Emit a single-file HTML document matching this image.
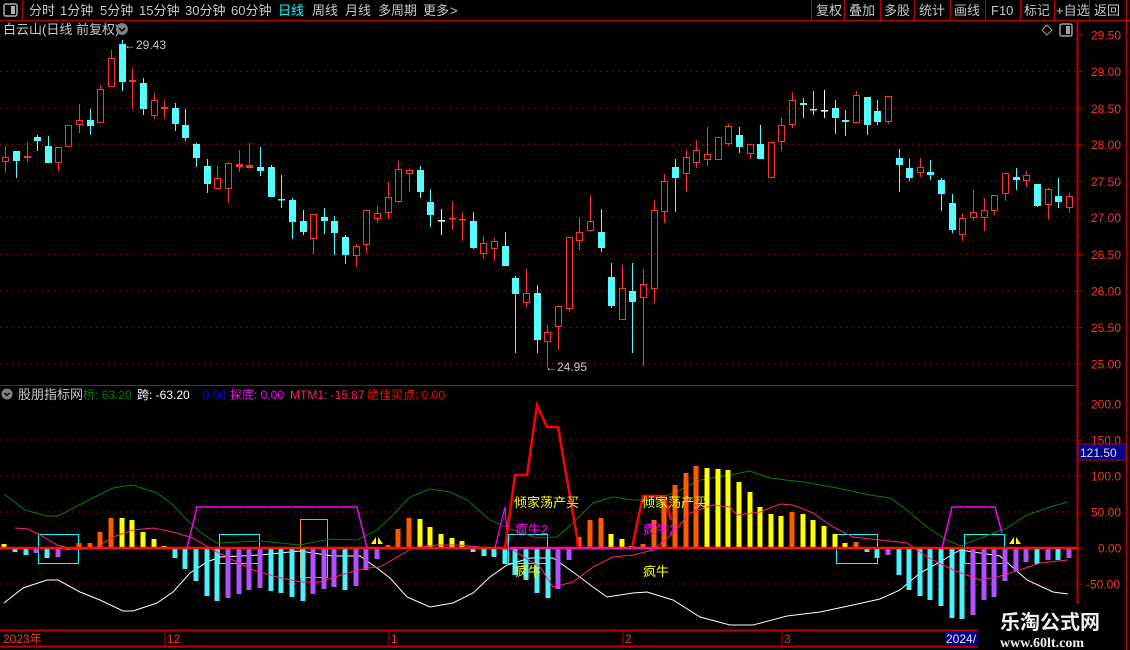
<!DOCTYPE html>
<html><head><meta charset="utf-8"><style>
html,body{margin:0;padding:0;background:#000;width:1130px;height:650px;overflow:hidden;font-family:"Liberation Sans","Noto Sans CJK SC",sans-serif;}
svg{position:absolute;left:0;top:0}
</style></head><body>
<svg id="s" width="1130" height="650" xmlns="http://www.w3.org/2000/svg" font-family="Liberation Sans, Noto Sans CJK SC, sans-serif">
<rect width="1130" height="650" fill="#000"/>
<!-- toolbar -->
<line x1="0" y1="20.5" x2="1130" y2="20.5" stroke="#c00000"/>
<line x1="22.5" y1="0" x2="22.5" y2="20" stroke="#c00000"/>
<rect x="4" y="4" width="13" height="12" rx="2" fill="none" stroke="#b0b0b0" stroke-width="1.5"/>
<rect x="11" y="6" width="4" height="8" fill="#b0b0b0"/>
<g font-size="13" fill="#c8c8c8">
<text x="29" y="15">分时</text><text x="60" y="15">1分钟</text><text x="100" y="15">5分钟</text><text x="139" y="15">15分钟</text><text x="185" y="15">30分钟</text><text x="231" y="15">60分钟</text><text x="278" y="15" fill="#00ffff">日线</text><text x="312" y="15">周线</text><text x="345" y="15">月线</text><text x="378" y="15">多周期</text><text x="423" y="15">更多</text><text x="450" y="15">&gt;</text>
<text x="816" y="15">复权</text><text x="849" y="15">叠加</text><text x="884" y="15">多股</text><text x="919" y="15">统计</text><text x="954" y="15">画线</text><text x="991" y="15">F10</text><text x="1024" y="15">标记</text><text x="1056" y="15">+自选</text><text x="1094" y="15">返回</text>
</g>
<g stroke="#c00000"><line x1="811.5" y1="0" x2="811.5" y2="20"/><line x1="844.5" y1="0" x2="844.5" y2="20"/><line x1="880.5" y1="0" x2="880.5" y2="20"/><line x1="914.5" y1="0" x2="914.5" y2="20"/><line x1="950.5" y1="0" x2="950.5" y2="20"/><line x1="985.5" y1="0" x2="985.5" y2="20"/><line x1="1020.5" y1="0" x2="1020.5" y2="20"/><line x1="1054.5" y1="0" x2="1054.5" y2="20"/><line x1="1089.5" y1="0" x2="1089.5" y2="20"/><line x1="1126.5" y1="0" x2="1126.5" y2="650"/></g>
<!-- title -->
<text x="3" y="34" font-size="13" fill="#c8c8c8">白云山(日线 前复权)</text>
<circle cx="122" cy="29" r="6" fill="#808080"/><path d="M119 28 L122 31 L125 28" stroke="#000" stroke-width="1.5" fill="none"/>
<path d="M1047 25 L1052 30 L1047 35 L1042 30 Z" fill="none" stroke="#a0a0a0"/>
<rect x="1060" y="24" width="12" height="12" rx="2" fill="none" stroke="#a0a0a0" stroke-width="1.5"/><rect x="1066" y="26" width="4" height="8" fill="#a0a0a0"/>
<!-- frames -->
<line x1="1077.5" y1="20" x2="1077.5" y2="630" stroke="#c00000" stroke-width="2"/>
<line x1="0" y1="385.5" x2="1077" y2="385.5" stroke="#c00000"/>
<line x1="0" y1="630.5" x2="978" y2="630.5" stroke="#c00000" stroke-width="2"/>
<line x1="0" y1="646.5" x2="978" y2="646.5" stroke="#c00000" stroke-width="2"/>
<g id="grid" stroke="#a01010" stroke-dasharray="1.5 4.5"></g>
<g id="ticks" stroke="#c00000"></g>
<g font-size="12" fill="#ff3030" id="axis"></g>
<g id="cand"></g>
<text x="124" y="49" font-size="12" fill="#c8c8c8">←29.43</text>
<text x="545" y="371" font-size="12" fill="#c8c8c8">←24.95</text>
<!-- indicator header -->
<circle cx="7" cy="394" r="5.5" fill="#808080"/><path d="M4.5 393 L7 395.5 L9.5 393" stroke="#000" stroke-width="1.3" fill="none"/>
<g font-size="12">
<text x="18" y="399" fill="#c8c8c8" font-size="13">股朋指标网</text>
<text x="83" y="399" fill="#008000">桥: 63.20</text>
<text x="137" y="399" fill="#ffffff">跨: -63.20</text>
<text x="196" y="399" fill="#0000ff">: 0.00</text>
<text x="230" y="399" fill="#ff00ff">探底: 0.00</text>
<text x="290" y="399" fill="#ff2070">MTM1: -15.87</text>
<text x="367" y="399" fill="#ff0000">绝佳买点: 0.00</text>
</g>
<g id="ind"></g>
<!-- bottom axis -->
<g stroke="#c00000"><line x1="165" y1="630" x2="165" y2="646"/><line x1="389" y1="630" x2="389" y2="646"/><line x1="623" y1="630" x2="623" y2="646"/><line x1="782" y1="630" x2="782" y2="646"/></g>
<g font-size="12" fill="#ff3030"><text x="3" y="643">2023年</text><text x="167" y="643">12</text><text x="391" y="643">1</text><text x="625" y="643">2</text><text x="784" y="643">3</text></g>
<rect x="945" y="631" width="33" height="15" fill="#000090"/><text x="946" y="643" font-size="12" fill="#e0e0e0">2024/</text>
<rect x="978" y="604" width="148" height="46" fill="#000"/>
<text x="1000" y="629" font-size="20" font-weight="bold" fill="#f0f0f0">乐淘公式网</text>
<text x="1000" y="647" font-size="14" font-weight="bold" fill="#f0f0f0" font-family="Liberation Serif, serif">www.60lt.com</text>
</svg>
<script>
var NS="http://www.w3.org/2000/svg";
function el(p,t,a,txt){var e=document.createElementNS(NS,t);for(var k in a)e.setAttribute(k,a[k]);if(txt!=null)e.textContent=txt;document.getElementById(p).appendChild(e);return e;}
// grid
[71.3,108.3,144.3,181.3,217.3,254.3,291,327.6,364].forEach(function(y){el('grid','line',{x1:0,y1:y,x2:1077,y2:y});});
[440,476,512,584].forEach(function(y){el('grid','line',{x1:0,y1:y,x2:1077,y2:y});});
// axis labels
var pl=[["29.50",35],["29.00",71.3],["28.50",108.3],["28.00",144.3],["27.50",181.3],["27.00",217.3],["26.50",254.3],["26.00",291],["25.50",327.6],["25.00",364]];
pl.forEach(function(p){el('axis','text',{x:1091,y:p[1]+4.5},p[0]);el('ticks','line',{x1:1077,y1:p[1],x2:1083,y2:p[1]});});
for(var y=35+18.2;y<380;y+=36.5)el('ticks','line',{x1:1077,y1:y,x2:1080,y2:y});
var il=[["200.0",404],["150.0",440],["100.0",476],["50.00",512],["0.00",548],["-50.00",584]];
il.forEach(function(p){el('axis','text',{x:(p[0]=="0.00"?1098:(p[0]=="-50.00"?1086:1091)),y:p[1]+4.5},p[0]);el('ticks','line',{x1:1077,y1:p[1],x2:1083,y2:p[1]});});
for(var y=422;y<620;y+=36)el('ticks','line',{x1:1077,y1:y,x2:1080,y2:y});
el('axis','rect',{x:1078,y:444,width:48,height:16,fill:"#000090",stroke:"#c00000"});
el('axis','text',{x:1080,y:457,fill:"#e0e0e0"},"121.50");
// candles
var C=[[4.5,146,173,157,162,'r'],[15.5,151,178,151,161,'c'],[26.7,142,162,156,158,'r'],[36.7,135,151,137,141,'c'],[47.7,136,163,146,163,'c'],[58.3,147,171,147,163,'r'],[68.3,125,147,125,147,'r'],[79.3,104,133,120,125,'r'],[90.3,109,135,120,126,'c'],[100.3,85,123,89,123,'r'],[111.3,50,87,58,87,'r'],[122.3,40,91,44,82,'c'],[132.3,68,109,80,82,'r'],[143.3,78,115,83,109,'c'],[154.3,93,119,100,116,'r'],[164.3,100,119,107,109,'r'],[175.3,103,131,108,124,'c'],[185.3,109,141,125,138,'c'],[196.3,143,167,144,158,'c'],[207.3,159,193,166,184,'c'],[217.3,166,189,178,189,'r'],[228.3,162,203,163,189,'r'],[239.3,150,172,164,167,'r'],[249.3,143,169,165,168,'r'],[260.3,147,176,167,171,'c'],[271.3,165,197,167,197,'c'],[281.3,175,208,199,200,'c'],[292.3,198,239,200,222,'c'],[303.3,210,235,221,232,'c'],[313.3,214,254,214,239,'r'],[324.3,208,234,217,221,'c'],[334.3,216,255,221,233,'c'],[345.3,235,264,237,255,'c'],[356.3,244,267,246,256,'r'],[366.3,210,253,210,245,'r'],[377.3,206,223,213,219,'r'],[388.3,182,219,197,213,'r'],[398.3,161,203,169,202,'r'],[409.3,169,192,170,174,'r'],[420.3,166,198,170,192,'c'],[430.3,189,227,202,215,'c'],[441.3,209,235,220,221,'w'],[452.3,201,230,218,219,'r'],[462.3,212,241,219,220,'r'],[473.3,212,249,221,248,'c'],[483.3,236,259,243,254,'r'],[494.3,238,261,241,249,'r'],[505.3,232,266,246,266,'c'],[515.3,276,353,278,294,'c'],[526.3,269,307,293,303,'r'],[537.3,285,353,293,340,'c'],[547.3,325,367,332,342,'r'],[558.3,305,350,306,327,'r'],[569.3,237,312,237,309,'r'],[579.3,217,250,232,241,'r'],[590.3,195,231,221,231,'r'],[601.3,209,252,232,248,'c'],[611.3,263,308,277,306,'c'],[622.3,265,320,288,320,'r'],[632.3,263,353,291,302,'c'],[643.3,269,366,284,298,'r'],[654.3,200,303,210,289,'r'],[664.3,174,223,181,212,'r'],[675.3,159,212,167,178,'c'],[686.3,150,192,157,174,'r'],[696.3,140,168,150,163,'r'],[707.3,127,166,154,160,'r'],[718.3,137,160,137,160,'r'],[728.3,124,146,126,144,'r'],[739.3,127,153,135,147,'c'],[750.3,144,159,144,154,'r'],[760.3,125,159,144,159,'c'],[771.3,142,178,142,178,'r'],[781.3,118,151,125,142,'r'],[792.3,92,128,100,125,'r'],[803.3,98,118,103,105,'c'],[813.3,91,115,109,110,'c'],[824.3,90,118,110,111,'w'],[835.3,100,134,108,118,'c'],[845.3,110,136,120,122,'c'],[856.3,91,123,95,123,'r'],[867.3,97,135,97,125,'c'],[877.3,100,125,111,122,'c'],[888.3,96,124,96,122,'r'],[899.3,149,192,158,165,'c'],[909.3,159,181,168,178,'c'],[920.3,158,177,167,173,'r'],[930.3,160,180,172,175,'c'],[941.3,178,211,180,194,'c'],[952.3,194,233,203,230,'c'],[962.3,214,241,218,235,'r'],[973.3,190,221,212,218,'r'],[984.3,198,231,210,218,'r'],[994.3,195,215,195,211,'r'],[1005.3,173,201,173,194,'r'],[1016.3,168,190,177,180,'c'],[1026.3,171,187,175,181,'r'],[1037.3,184,207,184,206,'c'],[1048.3,188,219,189,205,'r'],[1058.3,178,208,196,202,'c'],[1069.3,193,213,196,208,'r']];
C.forEach(function(c){var x=Math.round(c[0])+0.5,col=c[5]=='r'?'#ff3232':(c[5]=='c'?'#54fcfc':'#ffffff');
 var h=c[4]-c[3];
 if(c[5]=='r'&&h>3){el('cand','line',{x1:x,y1:c[1],x2:x,y2:c[3],stroke:col});el('cand','line',{x1:x,y1:c[4],x2:x,y2:c[2],stroke:col});el('cand','rect',{x:x-3,y:c[3]+.5,width:6,height:h-1,fill:'none',stroke:col});}
 else{el('cand','line',{x1:x,y1:c[1],x2:x,y2:c[2],stroke:col});el('cand','rect',{x:x-3.5,y:c[3],width:7,height:Math.max(h,1.5),fill:col});}
});
// indicator
var Z=548;
function pl2(pts,col,w){el('ind','polyline',{points:pts,fill:'none',stroke:col,'stroke-width':w||1});}
// boxes
[[38,534,40,29,'#00ffff'],[219,534,40,29,'#00ffff'],[508,534,39,29,'#00ffff'],[836,534,41,29,'#00ffff'],[964,534,40,29,'#00ffff'],[300,519,27,58,'#ff9020']].forEach(function(b){el('ind','rect',{x:b[0]+.5,y:b[1]+.5,width:b[2],height:b[3],fill:'none',stroke:b[4]});});
// green
pl2("4,494 25,510 47,516 58,516 93,498 113,488 132,485 157,493 173,505 187,520 200,532 217,543 260,541 300,545 330,539 357,540 377,530 390,518 410,497 430,489 450,492 467,500 490,520 513,530 537,538 557,537 573,523 593,503 613,497 633,500 657,500 680,490 700,480 730,475 750,471 770,478 803,482 837,488 870,495 890,498 907,510 927,527 947,540 960,546 1007,528 1027,515 1050,507 1068,502","#008000");
// white
pl2("4,603 23,588 47,580 58,580 80,592 100,600 123,611 133,611 157,603 173,592 190,573 207,562 220,557 260,555 300,551 333,556 360,556 377,568 390,578 407,597 430,607 453,603 473,593 490,577 507,565 530,558 553,558 573,572 593,587 607,597 633,593 647,592 673,600 700,617 730,625 753,625 787,616 820,612 853,605 880,599 900,590 920,573 940,562 960,550 1000,556 1010,565 1027,580 1053,592 1068,594","#ffffff");
// bars
var B=[[4.3,544,'Y'],[15.3,552,'C'],[26.3,555,'C'],[36.3,553,'P'],[47.3,558,'C'],[58.3,557,'P'],[68.3,550,'P'],[79.3,543,'O'],[90.3,543,'O'],[100.3,532,'O'],[111.3,518,'O'],[122.3,518,'Y'],[132.3,520,'Y'],[143.3,532,'Y'],[154.3,539,'Y'],[164.3,546,'Y'],[175.3,558,'C'],[185.3,569,'C'],[196.3,581,'C'],[207.3,596,'C'],[217.3,601,'C'],[228.3,598,'P'],[239.3,594,'P'],[249.3,590,'P'],[260.3,588,'P'],[271.3,591,'C'],[281.3,593,'C'],[292.3,597,'C'],[303.3,601,'C'],[313.3,594,'P'],[324.3,589,'P'],[334.3,587,'P'],[345.3,590,'C'],[356.3,586,'P'],[366.3,570,'P'],[377.3,559,'P'],[388.3,545,'O'],[398.3,529,'O'],[409.3,518,'O'],[420.3,519,'Y'],[430.3,527,'Y'],[441.3,534,'Y'],[452.3,538,'Y'],[462.3,541,'Y'],[473.3,552,'C'],[483.7,556,'C'],[494.3,557,'C'],[505.3,564,'C'],[515.3,575,'C'],[526.3,580,'C'],[537.3,593,'C'],[547.7,598,'C'],[558.3,589,'P'],[569.3,560,'P'],[579.3,537,'O'],[590.3,520,'O'],[601.3,518,'O'],[611.3,534,'Y'],[622.3,539,'Y'],[632.3,546,'Y'],[643.3,544,'O'],[654.3,520,'O'],[664.3,500,'O'],[675.3,485,'O'],[686.3,473,'O'],[696.3,466,'O'],[707.3,468,'Y'],[718.3,469,'Y'],[728.3,470,'Y'],[739.3,482,'Y'],[750.3,492,'Y'],[760.3,507,'Y'],[771.3,514,'Y'],[781.3,516,'Y'],[792.3,512,'O'],[803.3,514,'Y'],[813.3,520,'Y'],[824.3,526,'Y'],[835.3,534,'Y'],[845.3,543,'Y'],[856.3,542,'O'],[867.3,552,'C'],[877.3,558,'C'],[888.3,555,'P'],[899.3,575,'C'],[909.3,590,'C'],[920.3,596,'C'],[930.3,600,'C'],[941.3,606,'C'],[952.3,618,'C'],[962.3,619,'C'],[973.3,615,'P'],[984.3,600,'P'],[994.3,597,'P'],[1005.3,581,'P'],[1016.3,571,'P'],[1026.3,562,'P'],[1037.3,564,'C'],[1048.3,560,'P'],[1058.3,560,'C'],[1069.3,558,'P']];
var BC={Y:'#ffff00',O:'#ff5a00',C:'#4cf0fc',P:'#b050ff'};
B.forEach(function(b){var x=Math.round(b[0])-2.5;var y1=Math.min(b[1],Z),h=Math.abs(b[1]-Z);el('ind','rect',{x:x,y:y1,width:5,height:h,fill:BC[b[2]]});});
// crimson MTM
pl2("15,528 28,529 40,535 57,545 77,550 97,547 113,537 133,530 153,528 173,532 193,538 213,550 233,560 253,570 277,577 300,582 320,582 347,573 367,568 380,567 413,548 437,545 460,545 480,547 513,550 540,567 553,587 573,582 593,567 613,557 633,555 653,550 673,533 690,513 713,505 730,507 737,515 760,512 780,504 793,505 813,513 833,527 853,537 880,540 907,543 927,557 953,570 980,580 997,577 1020,570 1040,563 1068,560","#ff2080");
// zero line
el('ind','line',{x1:0,y1:548,x2:1077,y2:548,stroke:'#ff1010','stroke-width':2.5});
el('ind','line',{x1:508,y1:548,x2:660,y2:548,stroke:'#ff00ff','stroke-width':1.5});
// magenta trapezoids
pl2("187,548 197,507 357,507 367,548","#ff00ff",1.5);
pl2("495,548 505,507 508,548","#ff00ff",1.2);
pl2("942,548 952,507 995,507 1002,533","#ff00ff",1.5);
// red thick
pl2("505,548 515,475 527,475 537,405 547,427 558,427 577,537 578,548","#ff0000",2.5);
pl2("632,548 643,496 665,496 671,520","#ff0000",2.5);
// triangles
['371','1009'].forEach(function(x){x=+x;el('ind','path',{d:'M'+x+' 544 L'+(x+5)+' 537 L'+(x+5)+' 544 Z M'+(x+7)+' 544 L'+(x+7)+' 537 L'+(x+12)+' 544 Z',fill:'#ffff00'});});
// labels
[[514,643]].forEach(function(){});
[514,642].forEach(function(x){
 el('ind','text',{x:x,y:507,'font-size':13,fill:'#ffff00'},'倾家荡产买');
 el('ind','text',{x:x+1,y:534,'font-size':13,fill:'#ff00ff'},'疯牛2');
 el('ind','text',{x:x+1,y:576,'font-size':13,fill:'#ffff00'},'疯牛');
});
</script>
</body></html>
